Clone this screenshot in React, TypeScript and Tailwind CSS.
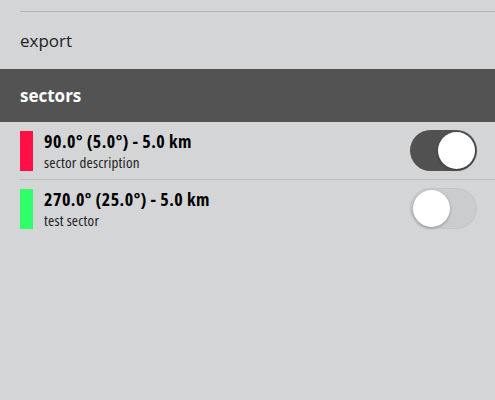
import React, { useState } from 'react';

type Sector = { id: number; title: string; desc: string; color: string; on: boolean };

const initial: Sector[] = [
  { id: 1, title: '90.0° (5.0°) - 5.0 km', desc: 'sector description', color: 'bg-[#ff0f45]', on: true },
  { id: 2, title: '270.0° (25.0°) - 5.0 km', desc: 'test sector', color: 'bg-[#2eff6a]', on: false },
];

function Toggle({ on, onClick }: { on: boolean; onClick: () => void }) {
  return (
    <button
      onClick={onClick}
      className={`flex h-[41px] w-[67px] items-center rounded-full p-[2px] ${
        on ? 'justify-end bg-[#515151]' : 'justify-start border border-[#c4c5c7] bg-[#cbcccd]'
      }`}
    >
      <span className="h-[37px] w-[37px] rounded-full bg-white shadow-[0_1px_3px_rgba(0,0,0,0.3)]" />
    </button>
  );
}

export default function App() {
  const [sectors, setSectors] = useState<Sector[]>(initial);

  const toggle = (id: number) =>
    setSectors((s) => s.map((x) => (x.id === id ? { ...x, on: !x.on } : x)));

  return (
    <main className="min-h-[400px] w-full bg-[#d4d5d7] font-['Open_Sans',sans-serif] text-[#111]">
      <div className="h-[11px]" />
      <div className="ml-5 border-t border-[#b4b5b7]" />
      <div className="flex h-[57px] items-center px-5 text-[17px] text-[#222]">export</div>

      <div className="flex h-[53px] items-center bg-[#535353] px-5 text-[17px] font-bold text-white">
        sectors
      </div>

      <ul className="font-stretch-condensed">
        {sectors.map((s, i) => (
          <li key={s.id}>
            {i > 0 && <div className="ml-5 border-t border-[#bdbec0]" />}
            <div className="flex h-[57px] items-center pl-5 pr-[18px]">
              <div className={`h-[40px] w-[13px] ${s.color}`} />
              <div className="ml-[11px] flex flex-1 flex-col pb-[1px]">
                <span className="text-[18px] font-bold leading-[24px] tracking-[0.5px] text-black">{s.title}</span>
                <span className="text-[15px] leading-[18px] tracking-[0.2px] text-[#222]">{s.desc}</span>
              </div>
              <Toggle on={s.on} onClick={() => toggle(s.id)} />
            </div>
          </li>
        ))}
      </ul>
    </main>
  );
}
